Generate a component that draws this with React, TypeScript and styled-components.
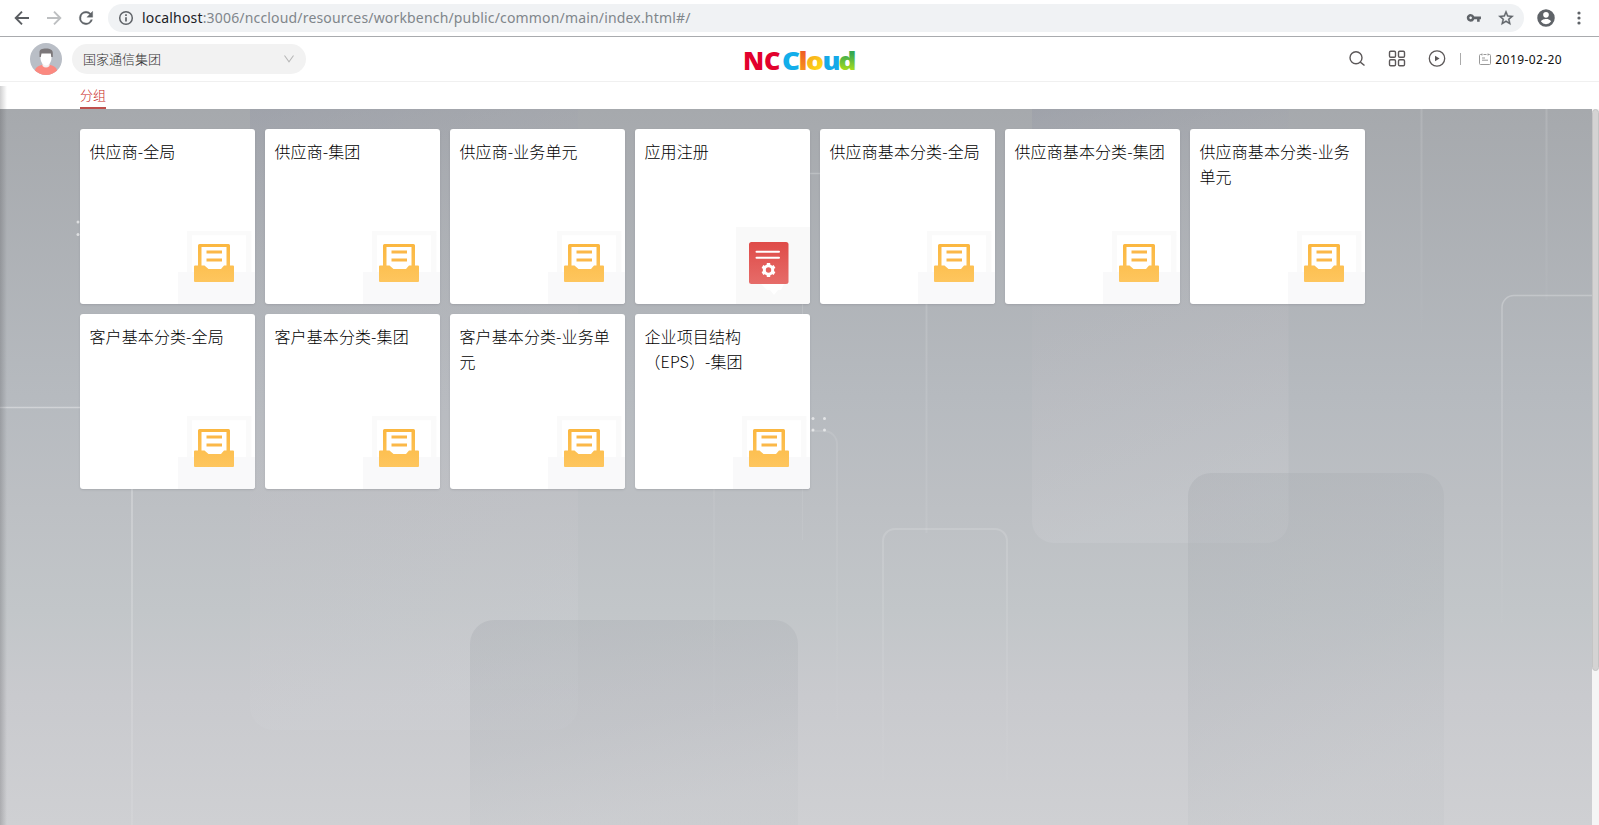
import React from "react";
import styled, { createGlobalStyle } from "styled-components";

const GlobalStyle = createGlobalStyle`
  * { box-sizing: border-box; }
  body {
    margin: 0;
    overflow: hidden;
    font-family: "Noto Sans", "Noto Sans CJK SC", sans-serif;
    background: #fff;
  }
`;

const Page = styled.div`
  position: relative;
  display: flex;
  flex-direction: column;
  width: 1599px;
  height: 825px;
  background: #fff;
`;

const BrowserBar = styled.div`
  display: flex;
  align-items: center;
  flex: none;
  height: 37px;
  padding: 0 9px 0 12px;
  border-bottom: 1px solid #a9abae;
`;

const NavButtons = styled.div`
  display: flex;
  gap: 12px;
  margin-right: 12px;
`;

const AddressField = styled.div`
  display: flex;
  align-items: center;
  width: 1416px;
  height: 28px;
  padding: 0 9px 0 10px;
  border-radius: 14px;
  background: #f0f2f4;
`;

const Url = styled.span`
  flex: 1;
  margin-left: 8px;
  font-size: 14px;
  letter-spacing: 0.17px;
  line-height: 28px;
  white-space: nowrap;
  color: #80868b;
`;

const UrlHost = styled.span`
  color: #202124;
`;

const FieldIcons = styled.div`
  display: flex;
  gap: 14px;
`;

const BrowserActions = styled.div`
  display: flex;
  align-items: center;
  gap: 13px;
  margin-left: 12px;
`;

const Header = styled.header`
  display: grid;
  grid-template-columns: 1fr auto 1fr;
  align-items: center;
  flex: none;
  height: 45px;
  padding: 0 37px 0 30px;
  border-bottom: 1px solid #f0f0f0;
`;

const HeaderLeft = styled.div`
  display: flex;
  align-items: center;
  gap: 10px;
`;

const GroupSelect = styled.div`
  display: flex;
  align-items: center;
  justify-content: space-between;
  width: 234px;
  height: 30px;
  padding: 0 11px 1px;
  border-radius: 15px;
  background: #f2f2f2;
  color: #333;
  font-family: "Noto Sans CJK SC", sans-serif;
  font-size: 13px;
  font-weight: 300;
  line-height: 26px;
`;

const LogoSvg = styled.svg`
  display: block;
  margin-left: 8px;
  overflow: visible;
`;

const HeaderTools = styled.div`
  display: flex;
  align-items: center;
  justify-content: flex-end;
`;

const ToolIcons = styled.div`
  display: flex;
  gap: 20px;
`;

const Divider = styled.span`
  width: 1px;
  height: 12px;
  margin: 0 18px 0 13px;
  background: #aaa;
`;

const DateText = styled.span`
  margin-left: 4px;
  font-size: 12px;
  letter-spacing: 0.4px;
  color: #111;
  white-space: nowrap;
`;

const TabBar = styled.nav`
  display: flex;
  flex: none;
  height: 27px;
  padding-left: 80px;
`;

const Tab = styled.span`
  height: 27px;
  border-bottom: 2px solid #bf4f4c;
  color: #c81e1a;
  font-family: "Noto Sans CJK SC", sans-serif;
  font-size: 13px;
  font-weight: 300;
  line-height: 26px;
`;

const Body = styled.div`
  display: flex;
  flex: 1;
`;

const Workspace = styled.main`
  position: relative;
  width: 1592px;
  height: 716px;
  padding: 20px 80px;
`;

const WallpaperSvg = styled.svg`
  position: absolute;
  inset: 0;
`;

const EdgeShade = styled.div`
  position: absolute;
  left: 0;
  top: 86px;
  width: 7px;
  height: 739px;
  background: linear-gradient(90deg, rgba(60, 60, 64, 0.24), rgba(60, 60, 64, 0));
`;

const CardGrid = styled.div`
  position: relative;
  display: grid;
  grid-template-columns: repeat(7, 175px);
  grid-auto-rows: 175px;
  gap: 10px;
`;

const Card = styled.article`
  display: flex;
  flex-direction: column;
  justify-content: space-between;
  overflow: hidden;
  border-radius: 3px;
  background: #fff;
  box-shadow: 0 1px 2px rgba(80, 80, 90, 0.18);
`;

const CardTitle = styled.h2`
  margin: 0;
  padding: 10px 8px 0 9.5px;
  color: #000;
  font-family: "Noto Sans CJK SC", sans-serif;
  font-size: 16px;
  font-weight: 300;
  letter-spacing: 0.1px;
  line-height: 25px;
`;

const WideParen = styled.span`
  font-family: "Noto Sans CJK TC", sans-serif;
`;

const CardArt = styled.svg`
  display: block;
  flex: none;
  align-self: flex-end;
`;

const ScrollTrack = styled.div`
  width: 7px;
  background: #f5f5f5;
`;

const ScrollThumb = styled.div`
  width: 7px;
  height: 562px;
  border: 1px solid #c4c4c4;
  border-radius: 4px;
  background: #d4d3d3;
`;

function Wallpaper() {
  return (
    <WallpaperSvg width="1592" height="716" viewBox="0 109 1592 716">
      <defs>
        <linearGradient id="sky" x1="0" y1="0" x2="0" y2="1">
          <stop offset="0" stopColor="#a6a9ad" />
          <stop offset="0.4" stopColor="#b6babf" />
          <stop offset="0.56" stopColor="#bdc0c4" />
          <stop offset="0.7" stopColor="#c2c6c9" />
          <stop offset="0.82" stopColor="#c9cace" />
          <stop offset="1" stopColor="#cfd0d3" />
        </linearGradient>
        <linearGradient id="hang" x1="0" y1="0" x2="0.15" y2="1">
          <stop offset="0" stopColor="#9094a4" stopOpacity="0.3" />
          <stop offset="0.3" stopColor="#b0b1b8" stopOpacity="0.14" />
          <stop offset="0.65" stopColor="#c6c3c8" stopOpacity="0.22" />
          <stop offset="1" stopColor="#d0d2d6" stopOpacity="0.3" />
        </linearGradient>
        <linearGradient id="rise" x1="0" y1="0" x2="0.3" y2="1">
          <stop offset="0" stopColor="#a6aaaf" stopOpacity="0.36" />
          <stop offset="0.6" stopColor="#aeb2b7" stopOpacity="0.27" />
          <stop offset="1" stopColor="#b8bcc0" stopOpacity="0.16" />
        </linearGradient>
        <linearGradient id="fadeLeft" gradientUnits="userSpaceOnUse" x1="0" y1="400" x2="0" y2="825">
          <stop offset="0" stopColor="#fff" stopOpacity="0.36" />
          <stop offset="1" stopColor="#fff" stopOpacity="0.1" />
        </linearGradient>
        <linearGradient id="fadeMid" gradientUnits="userSpaceOnUse" x1="0" y1="300" x2="0" y2="760">
          <stop offset="0" stopColor="#fff" stopOpacity="0.14" />
          <stop offset="1" stopColor="#fff" stopOpacity="0" />
        </linearGradient>
        <linearGradient id="fadeBox" gradientUnits="userSpaceOnUse" x1="0" y1="525" x2="0" y2="770">
          <stop offset="0" stopColor="#fff" stopOpacity="0.14" />
          <stop offset="1" stopColor="#fff" stopOpacity="0.02" />
        </linearGradient>
        <linearGradient id="fadeRight" gradientUnits="userSpaceOnUse" x1="0" y1="290" x2="0" y2="640">
          <stop offset="0" stopColor="#fff" stopOpacity="0.25" />
          <stop offset="1" stopColor="#fff" stopOpacity="0" />
        </linearGradient>
        <linearGradient id="fadeTop" gradientUnits="userSpaceOnUse" x1="0" y1="109" x2="0" y2="345">
          <stop offset="0" stopColor="#fff" stopOpacity="0.13" />
          <stop offset="1" stopColor="#fff" stopOpacity="0" />
        </linearGradient>
      </defs>
      <rect y="109" width="1592" height="716" fill="url(#sky)" />
      <path d="M250 109H578V706a24 24 0 0 1-24 24H274a24 24 0 0 1-24-24Z" fill="url(#hang)" />
      <path d="M1032 109H1288.500V521a22 22 0 0 1-22 22H1054a22 22 0 0 1-22-22Z" fill="url(#hang)" />
      <path d="M470 825V644a24 24 0 0 1 24-24H774a24 24 0 0 1 24 24V825Z" fill="url(#rise)" />
      <path d="M1188 825V496a23 23 0 0 1 23-23H1421a23 23 0 0 1 23 23V825Z" fill="url(#rise)" />
      <g fill="none">
        <path d="M0 407.500H120a12 12 0 0 1 12 12V825" stroke="url(#fadeLeft)" strokeWidth="1.500" />
        <path d="M714 480V740" stroke="url(#fadeMid)" strokeWidth="1.400" />
        <path d="M780 173.500H830" stroke="#fff" strokeOpacity="0.22" strokeWidth="1.500" />
        <path d="M790 290q12 0 12.500 14V540" stroke="url(#fadeMid)" />
        <path d="M810 431h14a13 13 0 0 1 13 13V720" stroke="url(#fadeMid)" strokeWidth="1.800" />
        <path d="M926.500 300V533" stroke="url(#fadeMid)" strokeWidth="1.800" />
        <path d="M883 780V541a12 12 0 0 1 12-12H995a12 12 0 0 1 12 12V780" stroke="url(#fadeBox)" strokeWidth="2" />
        <path d="M1421.500 109V345M1546.500 109V300" stroke="url(#fadeTop)" strokeWidth="2" />
        <path d="M1592 295.500H1514a12 12 0 0 0-12 12V640" stroke="url(#fadeRight)" strokeWidth="1.500" />
      </g>
      <g fill="#fff" fillOpacity="0.6">
        <circle cx="78" cy="222" r="1.500" />
        <circle cx="78" cy="234.500" r="1.500" />
        <circle cx="813" cy="418.500" r="1.500" />
        <circle cx="824.500" cy="418.500" r="1.500" />
        <circle cx="813" cy="430" r="1.500" />
        <circle cx="824.500" cy="430" r="1.500" />
      </g>
    </WallpaperSvg>
  );
}

function InboxArt() {
  return (
    <CardArt width="80" height="80" viewBox="0 0 80 80">
      <defs>
        <linearGradient id="amber" gradientUnits="userSpaceOnUse" x1="0" y1="20" x2="0" y2="58">
          <stop offset="0" stopColor="#fbb740" />
          <stop offset="1" stopColor="#fec65e" />
        </linearGradient>
      </defs>
      <path d="M12 48V7H76.500V48H71V11.500H17V48Z" fill="#fafafa" />
      <path d="M3 48H80V80H3Z" fill="#f9f9fa" />
      <path d="M17 11.500H71V48H17Z" fill="#fff" />
      <path
        d="M24.500 20H53.500a1.500 1.500 0 0 1 1.500 1.500V41.500H58a1 1 0 0 1 1 1V57a1 1 0 0 1-1 1H20a1 1 0 0 1-1-1V42.500a1 1 0 0 1 1-1H23V21.500a1.500 1.500 0 0 1 1.500-1.500ZM26.500 23V41.500H29.500L33.500 45H46L49 41.500H51.500V23Z"
        fill="url(#amber)"
        fillRule="evenodd"
      />
      <path d="M31.500 26.500H47v3H31.500ZM31.500 34.500H47v3H31.500Z" fill="#fbb848" />
    </CardArt>
  );
}

function RegisterArt() {
  return (
    <CardArt width="80" height="80" viewBox="0 0 80 80">
      <defs>
        <linearGradient id="brick" x1="0" y1="0" x2="0" y2="1">
          <stop offset="0" stopColor="#df4b48" />
          <stop offset="1" stopColor="#e66c69" />
        </linearGradient>
      </defs>
      <path d="M6 3H80V80H6Z" fill="#f9f9f9" />
      <path d="M31 60H54L51 66H48L44 71L40 66H37Z" fill="#fff" />
      <rect x="19" y="18" width="39.500" height="42" rx="2.500" fill="url(#brick)" />
      <path d="M26.500 27.700H49M26.500 33.700H49" stroke="#fff" strokeWidth="2" strokeLinecap="round" />
      <circle cx="38.500" cy="46" r="4.200" fill="none" stroke="#fff" strokeWidth="3" />
      <g stroke="#fff" strokeWidth="3.400">
        <path d="M38.500 39V42M38.500 50V53" />
        <path d="M32.440 42.500L35 44M42 48L44.560 49.500" />
        <path d="M32.440 49.500L35 48M42 44L44.560 42.500" />
      </g>
    </CardArt>
  );
}

function BackIcon() {
  return (
    <svg width="20" height="20" viewBox="0 0 20 20" fill="none" stroke="#5a5d61" strokeWidth="1.900">
      <path d="M17 10H3.500M10 3.700L3.700 10L10 16.300" />
    </svg>
  );
}

function ForwardIcon() {
  return (
    <svg width="20" height="20" viewBox="0 0 20 20" fill="none" stroke="#bdbfc1" strokeWidth="1.900">
      <path d="M3 10H16.500M10 3.700L16.300 10L10 16.300" />
    </svg>
  );
}

function ReloadIcon() {
  return (
    <svg width="20" height="20" viewBox="0 0 24 24" fill="#5f6368" stroke="#5f6368" strokeWidth="0.400">
      <path d="M17.650 6.350A7.960 7.960 0 0 0 12 4a8 8 0 1 0 7.730 10h-2.080A6 6 0 1 1 12 6c1.660 0 3.140.69 4.220 1.780L13 11h7V4z" />
    </svg>
  );
}

function InfoIcon() {
  return (
    <svg width="16" height="16" viewBox="0 0 16 16" fill="none" stroke="#5f6368" strokeWidth="1.500">
      <circle cx="8" cy="8" r="6.300" />
      <path d="M8 7.200V11.500M8 4.300V5.900" strokeWidth="1.700" />
    </svg>
  );
}

function KeyIcon() {
  return (
    <svg width="18" height="18" viewBox="0 0 24 24" fill="#5f6368">
      <path
        d="M12.650 10A5.990 5.990 0 0 0 7 6c-3.310 0-6 2.690-6 6s2.690 6 6 6a5.990 5.990 0 0 0 5.650-4H17v4h4v-4h2v-4H12.650zM7 14c-1.100 0-2-.9-2-2s.9-2 2-2 2 .9 2 2-.9 2-2 2z"
        transform="translate(1.500 1.500) scale(.86)"
      />
    </svg>
  );
}

function StarIcon() {
  return (
    <svg width="18" height="18" viewBox="0 0 24 24" fill="#5f6368" stroke="#5f6368" strokeWidth="0.500">
      <path d="M22 9.240l-7.190-.62L12 2 9.190 8.630 2 9.240l5.460 4.730L5.820 21 12 17.270 18.180 21l-1.630-7.030L22 9.240zM12 15.400l-3.760 2.270 1-4.280-3.320-2.880 4.380-.38L12 6.100l1.710 4.040 4.380.38-3.320 2.880 1 4.280L12 15.400z" />
    </svg>
  );
}

function ProfileIcon() {
  return (
    <svg width="20" height="20" viewBox="0 0 24 24" fill="#5f6368">
      <path d="M12 1.500a10.500 10.500 0 1 0 0 21 10.500 10.500 0 0 0 0-21zm0 3.300a3.400 3.400 0 1 1 0 6.800 3.400 3.400 0 0 1 0-6.800zm0 14.700a7.300 7.300 0 0 1-6-3.220c.03-1.990 4-3.080 6-3.080s5.970 1.090 6 3.080a7.300 7.300 0 0 1-6 3.220z" />
    </svg>
  );
}

function KebabIcon() {
  return (
    <svg width="20" height="20" viewBox="0 0 20 20" fill="#5f6368">
      <circle cx="10" cy="5" r="1.600" />
      <circle cx="10" cy="10" r="1.600" />
      <circle cx="10" cy="15" r="1.600" />
    </svg>
  );
}

function Avatar() {
  return (
    <svg width="32" height="32" viewBox="0 0 32 32">
      <defs>
        <clipPath id="disc">
          <circle cx="16" cy="16" r="16" />
        </clipPath>
      </defs>
      <g clipPath="url(#disc)">
        <rect width="32" height="32" fill="#b9bec6" />
        <path d="M5 32V28C5 24 9 22.500 13 21.500H19C23 22.500 27 24 27 28V32Z" fill="#fb8980" />
        <path d="M12.500 18H19.500V23Q16 26 12.500 23Z" fill="#f3f1f2" />
        <path d="M10.500 9H21.500V15C21.500 19.500 18.500 22.500 16 22.500C13.500 22.500 10.500 19.500 10.500 15Z" fill="#fff" />
        <path d="M9.500 14V9C9.500 6.500 12 5.500 16 5.500C20.500 5.500 22.800 7 22.800 10V14H21.300L20.800 10.500H11.500L10.800 14Z" fill="#7b7779" />
      </g>
    </svg>
  );
}

function Logo() {
  return (
    <LogoSvg width="116" height="44" viewBox="742 37 116 44" fontFamily="Open Sans, sans-serif" fontWeight="800" fontSize="24">
      <defs>
        <linearGradient id="logoOrange" x1="0" y1="0" x2="0" y2="1">
          <stop offset="0.2" stopColor="#ee5a24" />
          <stop offset="1" stopColor="#f9a51a" />
        </linearGradient>
        <linearGradient id="logoYellow" x1="0" y1="0" x2="0.6" y2="1">
          <stop offset="0.3" stopColor="#f7a81b" />
          <stop offset="1" stopColor="#ffe11a" />
        </linearGradient>
        <linearGradient id="logoGreen" x1="0" y1="0" x2="0" y2="1">
          <stop offset="0.3" stopColor="#35a852" />
          <stop offset="0.8" stopColor="#a6dc1e" />
        </linearGradient>
      </defs>
      <text x="743" y="70" textLength="37.500" lengthAdjust="spacingAndGlyphs" fill="#e2012d">NC</text>
      <text x="782" y="70" textLength="18" lengthAdjust="spacingAndGlyphs" fill="#12aeea">C</text>
      <text x="798.500" y="69.500" textLength="9" lengthAdjust="spacingAndGlyphs" fill="url(#logoOrange)">l</text>
      <text x="806" y="69.500" textLength="18" lengthAdjust="spacingAndGlyphs" fill="url(#logoYellow)">o</text>
      <text x="822.500" y="69.500" textLength="18" lengthAdjust="spacingAndGlyphs" fill="#14a9e8">u</text>
      <text x="838.500" y="69.500" textLength="18" lengthAdjust="spacingAndGlyphs" fill="url(#logoGreen)">d</text>
    </LogoSvg>
  );
}

function ChevronIcon() {
  return (
    <svg width="12" height="10" viewBox="0 0 12 10" fill="none" stroke="#b8b8b8" strokeWidth="1.100">
      <path d="M1.500 1.500L6 7.800L10.500 1.500" />
    </svg>
  );
}

function SearchIcon() {
  return (
    <svg width="20" height="20" viewBox="0 0 20 20" fill="none" stroke="#5c5859" strokeWidth="1.400">
      <circle cx="9" cy="8.800" r="6" />
      <path d="M13.300 13.100L17.500 16.500" />
    </svg>
  );
}

function AppsIcon() {
  return (
    <svg width="20" height="20" viewBox="0 0 20 20" fill="none" stroke="#5c5859" strokeWidth="1.400">
      <rect x="2.500" y="2.200" width="6" height="6" rx="1.200" />
      <rect x="11.500" y="2.200" width="6" height="6" rx="1.200" />
      <rect x="2.500" y="10.700" width="6" height="6" rx="1.200" />
      <rect x="11.500" y="10.700" width="6" height="6" rx="1.200" />
    </svg>
  );
}

function PlayIcon() {
  return (
    <svg width="20" height="20" viewBox="0 0 20 20" fill="none" stroke="#5c5859" strokeWidth="1.300">
      <circle cx="10" cy="9.500" r="7.700" />
      <path d="M8 6.700L12.600 9.500L8 12.300Z" fill="#5c5859" stroke="none" />
    </svg>
  );
}

function CalendarIcon() {
  return (
    <svg width="12" height="13" viewBox="0 0 12 13" fill="none" stroke="#999" strokeWidth="1">
      <path d="M3 1.500H1.500a1 1 0 0 0-1 1V10.500a1 1 0 0 0 1 1H10.500a1 1 0 0 0 1-1V2.500a1 1 0 0 0-1-1H9M4.500 1.500H7.500M3 .5V2.500M9 .5V2.500M3 5H6M3 7.200H9" />
    </svg>
  );
}

const APPS = [
  { title: "供应商-全局" },
  { title: "供应商-集团" },
  { title: "供应商-业务单元" },
  { title: "应用注册", register: true },
  { title: "供应商基本分类-全局" },
  { title: "供应商基本分类-集团" },
  { title: "供应商基本分类-业务单元" },
  { title: "客户基本分类-全局" },
  { title: "客户基本分类-集团" },
  { title: "客户基本分类-业务单元" },
  { title: "企业项目结构（EPS）-集团" },
];

function renderTitle(title: string) {
  return title
    .split(/([（）])/)
    .map((part, i) => (part === "（" || part === "）" ? <WideParen key={i} lang="zh-Hant">{part}</WideParen> : part));
}

export default function App() {
  return (
    <Page>
      <GlobalStyle />
      <BrowserBar>
        <NavButtons>
          <BackIcon />
          <ForwardIcon />
          <ReloadIcon />
        </NavButtons>
        <AddressField>
          <InfoIcon />
          <Url>
            <UrlHost>localhost</UrlHost>:3006/nccloud/resources/workbench/public/common/main/index.html#/
          </Url>
          <FieldIcons>
            <KeyIcon />
            <StarIcon />
          </FieldIcons>
        </AddressField>
        <BrowserActions>
          <ProfileIcon />
          <KebabIcon />
        </BrowserActions>
      </BrowserBar>
      <Header>
        <HeaderLeft>
          <Avatar />
          <GroupSelect>
            国家通信集团
            <ChevronIcon />
          </GroupSelect>
        </HeaderLeft>
        <Logo />
        <HeaderTools>
          <ToolIcons>
            <SearchIcon />
            <AppsIcon />
            <PlayIcon />
          </ToolIcons>
          <Divider />
          <CalendarIcon />
          <DateText>2019-02-20</DateText>
        </HeaderTools>
      </Header>
      <TabBar>
        <Tab>分组</Tab>
      </TabBar>
      <Body>
        <Workspace>
          <Wallpaper />
          <CardGrid>
            {APPS.map((app) => (
              <Card key={app.title}>
                <CardTitle>{renderTitle(app.title)}</CardTitle>
                {app.register ? <RegisterArt /> : <InboxArt />}
              </Card>
            ))}
          </CardGrid>
        </Workspace>
        <ScrollTrack>
          <ScrollThumb />
        </ScrollTrack>
      </Body>
      <EdgeShade />
    </Page>
  );
}
